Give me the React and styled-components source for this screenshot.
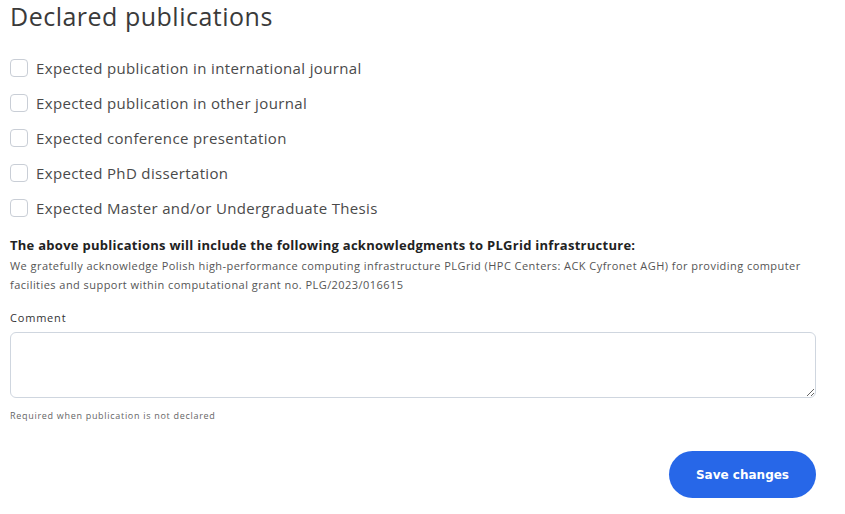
import React from "react";
import styled, { createGlobalStyle } from "styled-components";

const GlobalStyle = createGlobalStyle`
  html, body {
    margin: 0;
    padding: 0;
    background: #ffffff;
  }
  body {
    font-family: "Open Sans", "Noto Sans", sans-serif;
  }
`;

const Page = styled.div`
  width: 806px;
  padding: 1px 0 0 10px;
  display: flex;
  flex-direction: column;
`;

const Title = styled.h2`
  margin: 0;
  font-size: 25px;
  font-weight: 400;
  letter-spacing: 0.5px;
  line-height: 30px;
  color: #3a3a3a;
`;

const OptionList = styled.div`
  margin-top: 28px;
  display: flex;
  flex-direction: column;
  gap: 17px;
`;

const Option = styled.label`
  display: flex;
  align-items: center;
  gap: 8px;
  height: 18px;
  font-size: 15px;
  letter-spacing: 0.35px;
  color: #4a4a4a;
  cursor: pointer;
`;

const Box = styled.input.attrs({ type: "checkbox" })`
  appearance: none;
  margin: 0;
  width: 18px;
  height: 18px;
  border: 1px solid #c9ced6;
  border-radius: 4px;
  background: #fff;
  flex-shrink: 0;
`;

const AckTitle = styled.div`
  margin-top: 19px;
  font-size: 13px;
  font-weight: 700;
  letter-spacing: 0.27px;
  color: #222;
  line-height: 18px;
`;

const AckText = styled.p`
  margin: 2px 0 0;
  font-size: 11px;
  letter-spacing: 0.45px;
  line-height: 19px;
  color: #555;
`;

const FieldLabel = styled.label`
  margin-top: 16px;
  font-size: 11px;
  letter-spacing: 0.8px;
  color: #333;
  line-height: 16px;
`;

const CommentBox = styled.textarea`
  margin-top: 6px;
  box-sizing: border-box;
  width: 100%;
  height: 66px;
  border: 1px solid #cfd6df;
  border-radius: 6px;
  padding: 8px;
  font: inherit;
  resize: vertical;
`;

const Hint = styled.div`
  margin-top: 12px;
  font-size: 9px;
  letter-spacing: 0.7px;
  color: #666;
  line-height: 12px;
`;

const Actions = styled.div`
  margin-top: 29px;
  display: flex;
  justify-content: flex-end;
`;

const SaveButton = styled.button`
  width: 147px;
  height: 47px;
  border: none;
  border-radius: 24px;
  background: #2767e8;
  color: #fff;
  font-family: "DejaVu Sans", Verdana, sans-serif;
  font-size: 12px;
  font-weight: 700;
  cursor: pointer;
`;

const options = [
  "Expected publication in international journal",
  "Expected publication in other journal",
  "Expected conference presentation",
  "Expected PhD dissertation",
  "Expected Master and/or Undergraduate Thesis",
];

export default function App() {
  return (
    <>
      <GlobalStyle />
      <Page>
        <Title>Declared publications</Title>
        <OptionList>
          {options.map((text) => (
            <Option key={text}>
              <Box />
              {text}
            </Option>
          ))}
        </OptionList>
        <AckTitle>
          The above publications will include the following acknowledgments to
          PLGrid infrastructure:
        </AckTitle>
        <AckText>
          We gratefully acknowledge Polish high-performance computing
          infrastructure PLGrid (HPC Centers: ACK Cyfronet AGH) for providing
          computer facilities and support within computational grant no.
          PLG/2023/016615
        </AckText>
        <FieldLabel htmlFor="comment">Comment</FieldLabel>
        <CommentBox id="comment" />
        <Hint>Required when publication is not declared</Hint>
        <Actions>
          <SaveButton>Save changes</SaveButton>
        </Actions>
      </Page>
    </>
  );
}
